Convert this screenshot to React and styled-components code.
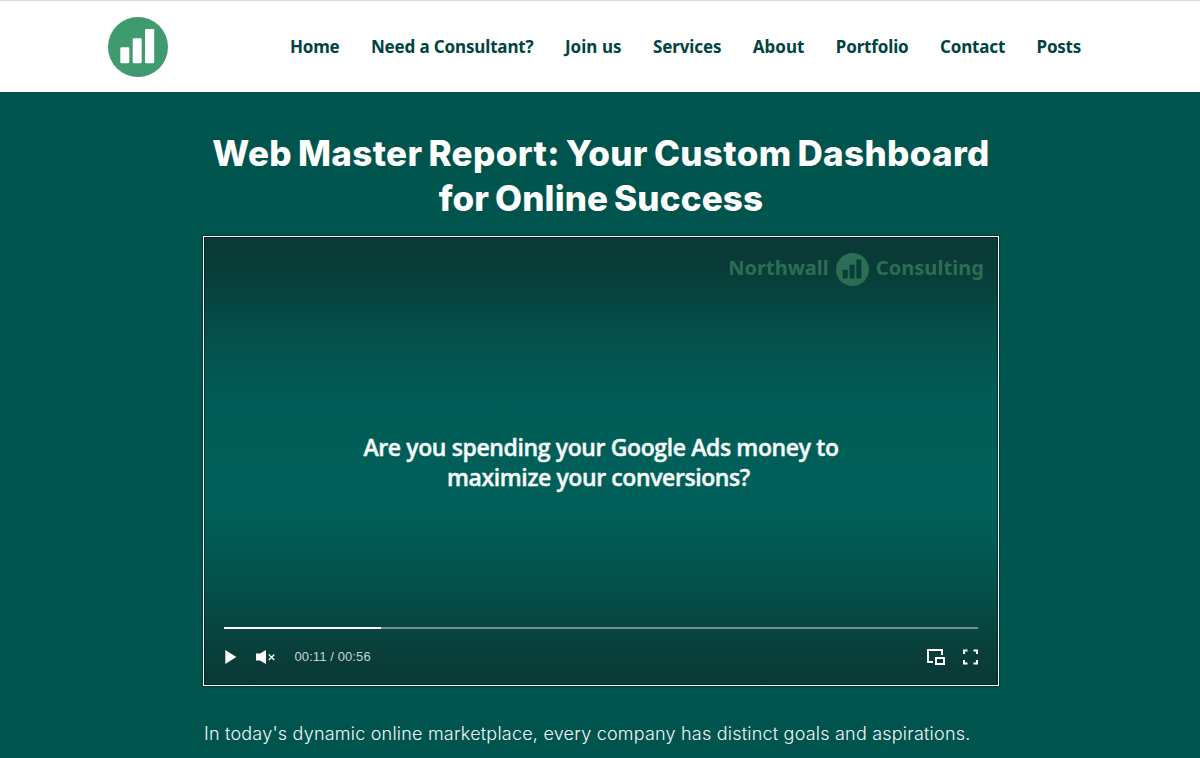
import React from "react";
import styled, { createGlobalStyle } from "styled-components";

const GlobalStyle = createGlobalStyle`
  *, *::before, *::after { box-sizing: border-box; }
  html, body { margin: 0; padding: 0; }
  body { background: #00544e; overflow: hidden; }
`;

const Page = styled.div`
  height: 758px;
  overflow: hidden;
  background: #00544e;
`;

const Header = styled.header`
  display: flex;
  align-items: center;
  height: 92px;
  padding: 0 119px 0 108px;
  background: #fff;
  border-top: 1px solid #d9d9d9;
`;

const HomeLink = styled.a`
  display: block;
  width: 60px;
  height: 60px;
  margin-right: 122px;
`;

const Nav = styled.nav`
  flex: 1;
  display: flex;
  justify-content: space-between;
`;

const NavLink = styled.a`
  font: 700 17px/24px "Noto Sans", sans-serif;
  letter-spacing: ${(p) => p.$tracking || 0}px;
  color: #00443f;
  white-space: nowrap;
`;

const Main = styled.main`
  width: 796px;
  margin: 0 auto 0 203px;
  padding-top: 39px;
`;

const Title = styled.h1`
  display: flex;
  flex-direction: column;
  align-items: center;
  margin: 0 0 15px;
  font: 800 35px/45px Inter, sans-serif;
  color: #fff;
  white-space: nowrap;
`;

const TitleLine = styled.span`
  letter-spacing: ${(p) => p.$tracking}px;
  word-spacing: -2px;
`;

const Player = styled.section`
  display: flex;
  flex-direction: column;
  height: 450px;
  padding: 14px 20px 18px;
  border: 1px solid #fff;
  outline: 1px solid rgba(0, 30, 28, 0.45);
  box-shadow: inset 0 0 0 1px rgba(0, 20, 18, 0.6);
  background: linear-gradient(#0a3936 0%, #093c38 7%, #04504b 22%, #005c56 36%, #005f58 50%, #005f58 62%, #04504b 78%, #08403c 91%, #0a3835 100%);
`;

const Watermark = styled.div`
  display: flex;
  align-items: center;
  align-self: flex-end;
  gap: 7px;
  height: 36px;
  margin-right: -6px;
  color: #2c6e53;
`;

const WatermarkWord = styled.span`
  padding-bottom: 2px;
  font: 700 20px/28px "Noto Sans", sans-serif;
  letter-spacing: ${(p) => p.$tracking}px;
  white-space: nowrap;
`;

const Caption = styled.p`
  display: flex;
  flex-direction: column;
  align-items: center;
  margin: 145px 0 0;
  font: 600 23px/30px "Open Sans", sans-serif;
  -webkit-text-stroke: 0.45px #f7fbfa;
  color: #f7fbfa;
  white-space: nowrap;
`;

const CaptionLine = styled.span`
  letter-spacing: ${(p) => p.$tracking}px;
  padding-right: ${(p) => p.$inset || 0}px;
`;

const Track = styled.div`
  height: 2px;
  margin-top: auto;
  background: #75918e;
`;

const Progress = styled.div`
  width: 157px;
  height: 2px;
  background: #fff;
`;

const Controls = styled.div`
  display: flex;
  align-items: center;
  height: 20px;
  margin-top: 18px;
  color: #fff;
`;

const Time = styled.span`
  margin-left: 18.500px;
  font: 400 13px/20px "Liberation Sans", sans-serif;
  letter-spacing: 0.1px;
  color: #c6d4d2;
`;

const Spacer = styled.span`
  flex: 1;
`;

const IconSvg = styled.svg`
  display: block;
  margin-left: ${(p) => p.$gap || 0}px;
`;

const Intro = styled.p`
  margin: 34px 0 0 1px;
  font: 300 18px/28px Inter, sans-serif;
  letter-spacing: 0.21px;
  color: #f2f7f6;
  white-space: nowrap;
`;

const Logo = ({ size, disc, bars }) => (
  <svg width={size} height={size} viewBox="0 0 60 60" display="block">
    <circle cx="30" cy="30" r="30" fill={disc} />
    <g fill={bars}>
      <rect x="12.3" y="30.3" width="9" height="16" rx="1.2" />
      <rect x="24.7" y="21.2" width="9" height="25" rx="1.2" />
      <rect x="37" y="12" width="9.2" height="34.3" rx="1.2" />
    </g>
  </svg>
);

const links = [
  ["Home", -0.2],
  ["Need a Consultant?", -0.15],
  ["Join us", 0.05],
  ["Services", -0.12],
  ["About", 0],
  ["Portfolio", -0.15],
  ["Contact", -0.15],
  ["Posts", -0.25],
];

export default function App() {
  return (
    <Page>
      <GlobalStyle />
      <Header>
        <HomeLink>
          <Logo size={60} disc="#3f9a70" bars="#fff" />
        </HomeLink>
        <Nav>
          {links.map(([label, tracking]) => (
            <NavLink key={label} $tracking={tracking}>{label}</NavLink>
          ))}
        </Nav>
      </Header>
      <Main>
        <Title>
          <TitleLine $tracking={0.35}>Web Master Report: Your Custom Dashboard</TitleLine>
          <TitleLine $tracking={0.15}>for Online Success</TitleLine>
        </Title>
        <Player>
          <Watermark>
            <WatermarkWord $tracking={0}>Northwall</WatermarkWord>
            <Logo size={33} disc="#2c6e53" bars="#083d39" />
            <WatermarkWord $tracking={0.06}>Consulting</WatermarkWord>
          </Watermark>
          <Caption>
            <CaptionLine $tracking={-0.38}>Are you spending your Google Ads money to</CaptionLine>
            <CaptionLine $tracking={-0.4} $inset={5}>maximize your conversions?</CaptionLine>
          </Caption>
          <Track>
            <Progress />
          </Track>
          <Controls>
            <IconSvg width="13" height="16" viewBox="0 0 13 16">
              <path d="M1.300 1v14l11-7z" fill="currentColor" />
            </IconSvg>
            <IconSvg $gap={19} width="20" height="16" viewBox="0 0 20 16">
              <path d="M0 4.500h4L10 1v14l-6-3.500H0z" fill="currentColor" />
              <path d="M12.800 5.500l5.500 5.500M18.300 5.500L12.800 11" stroke="currentColor" strokeWidth="1.300" />
            </IconSvg>
            <Time>00:11 / 00:56</Time>
            <Spacer />
            <IconSvg width="18" height="16" viewBox="0 0 18 16" fill="none" stroke="currentColor" strokeWidth="2">
              <path d="M6 13H1V1h14v5" />
              <path d="M9 9h8v6H9z" />
            </IconSvg>
            <IconSvg $gap={18} width="15" height="16" viewBox="0 0 15 16" fill="none" stroke="currentColor" strokeWidth="2">
              <path d="M1 5V1.500h3.500M10.500 1.500H14V5M14 11v3.500h-3.500M4.500 14.500H1V11" />
            </IconSvg>
          </Controls>
        </Player>
        <Intro>In today's dynamic online marketplace, every company has distinct goals and aspirations.</Intro>
      </Main>
    </Page>
  );
}
